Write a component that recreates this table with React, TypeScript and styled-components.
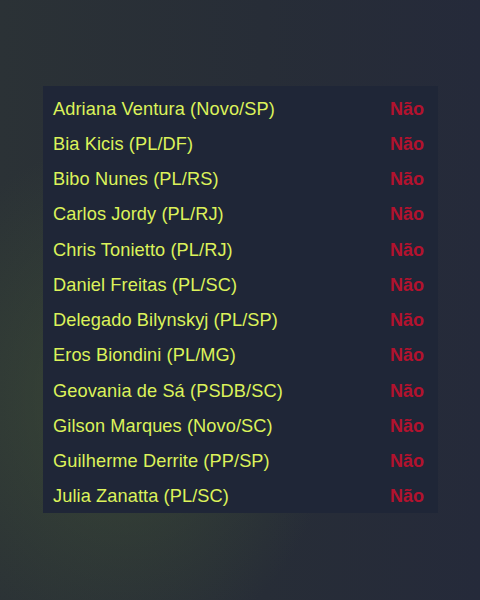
import styled, { createGlobalStyle } from "styled-components";

const GlobalStyle = createGlobalStyle`
  html, body {
    margin: 0;
    padding: 0;
  }
  body {
    font-family: "Liberation Sans", Arial, sans-serif;
  }
`;

const Screen = styled.div`
  width: 480px;
  height: 600px;
  box-sizing: border-box;
  padding: 86px 42px 0 43px;
  background:
    radial-gradient(ellipse 300px 360px at 120px 400px, rgba(66, 84, 52, 0.6), rgba(66, 84, 52, 0) 72%),
    linear-gradient(90deg, #2b3236 0%, #272d37 55%, #252a3a 100%);
`;

const Panel = styled.ul`
  list-style: none;
  margin: 0;
  padding: 5px 14px 0 10px;
  height: 427px;
  box-sizing: border-box;
  background: #1f2637;
  display: flex;
  flex-direction: column;
`;

const Row = styled.li`
  height: 35.25px;
  flex-shrink: 0;
  display: flex;
  align-items: center;
  justify-content: space-between;
  padding-top: 1px;
  box-sizing: border-box;
`;

const Name = styled.span`
  color: #dcf25a;
  font-size: 18.2px;
  letter-spacing: 0.1px;
`;

const Vote = styled.span<{ $no?: boolean }>`
  color: ${(p) => (p.$no ? "#b3122e" : "#3fb950")};
  font-size: 18px;
  font-weight: 700;
`;

const votes = [
  "Adriana Ventura (Novo/SP)",
  "Bia Kicis (PL/DF)",
  "Bibo Nunes (PL/RS)",
  "Carlos Jordy (PL/RJ)",
  "Chris Tonietto (PL/RJ)",
  "Daniel Freitas (PL/SC)",
  "Delegado Bilynskyj (PL/SP)",
  "Eros Biondini (PL/MG)",
  "Geovania de Sá (PSDB/SC)",
  "Gilson Marques (Novo/SC)",
  "Guilherme Derrite (PP/SP)",
  "Julia Zanatta (PL/SC)",
];

const App = () => {
  return (
    <>
      <GlobalStyle />
      <Screen>
        <Panel>
          {votes.map((name) => (
            <Row key={name}>
              <Name>{name}</Name>
              <Vote $no>Não</Vote>
            </Row>
          ))}
        </Panel>
      </Screen>
    </>
  );
};

export default App;
